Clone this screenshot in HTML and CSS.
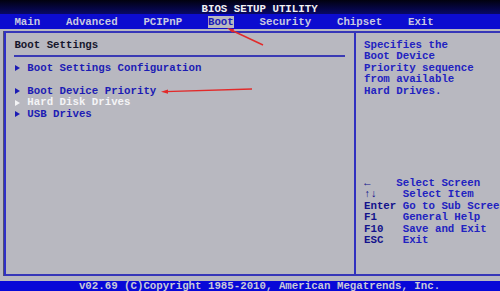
FILE: index.html
```html
<!DOCTYPE html>
<html lang="en">
<head>
<meta charset="utf-8">
<title>BIOS SETUP UTILITY</title>
<link rel="stylesheet" href="styles.css">
</head>
<body>
<div class="screen">
  <div class="title">                               BIOS SETUP UTILITY</div>
  <div class="menu">  Main    Advanced    PCIPnP    <span class="active">Boot</span>    Security    Chipset    Exit</div>
  <div class="main">
    <div class="box">
      <div class="left">
        <div class="row head">Boot Settings</div>
        <div class="sep"></div>
        <div class="row item"><span class="tri"></span>Boot Settings Configuration</div>
        <div class="row"></div>
        <div class="row item"><span class="tri"></span>Boot Device Priority</div>
        <div class="row item sel"><span class="tri"></span>Hard Disk Drives</div>
        <div class="row item"><span class="tri"></span>USB Drives</div>
      </div>
      <div class="right">
        <div class="help">
          <div class="row">Specifies the</div>
          <div class="row">Boot Device</div>
          <div class="row">Priority sequence</div>
          <div class="row">from available</div>
          <div class="row">Hard Drives.</div>
        </div>
        <div class="keys">
          <div class="row"><span class="k">←</span>    Select Screen</div>
          <div class="row"><span class="k">↑↓</span>    Select Item</div>
          <div class="row"><span class="k">Enter</span> Go to Sub Screen</div>
          <div class="row"><span class="k">F1</span>    General Help</div>
          <div class="row"><span class="k">F10</span>   Save and Exit</div>
          <div class="row"><span class="k">ESC</span>   Exit</div>
        </div>
      </div>
    </div>
  </div>
  <div class="footer">            v02.69 (C)Copyright 1985-2010, American Megatrends, Inc.</div>
  <svg class="arrows" width="500" height="291" viewBox="0 0 500 291">
    <line x1="263" y1="45" x2="231" y2="30" stroke="#e22a2a" stroke-width="1.4"/>
    <polygon points="227,28 234.2,29.2 232.5,32.8" fill="#e22a2a"/>
    <line x1="252" y1="89" x2="165" y2="91.6" stroke="#e22a2a" stroke-width="1.4"/>
    <polygon points="161,91.7 168,89.6 168,93.8" fill="#e22a2a"/>
  </svg>
</div>
</body>
</html>
```

FILE: styles.css
```css
* { box-sizing: border-box; margin: 0; padding: 0; }
html, body { width: 500px; height: 291px; overflow: hidden; background: #b8b8c0; }
body { font: bold 10.75px/11.5px "Liberation Mono", "DejaVu Sans Mono", monospace; }

.screen {
  position: relative;
  width: 500px;
  height: 291px;
  overflow: hidden;
  background: #b8b8c0;
  display: flex;
  flex-direction: column;
}

.title {
  height: 14px;
  flex-shrink: 0;
  padding: 4px 0 0 1.5px;
  background: linear-gradient(#01010f, #080866);
  color: #f2f2f2;
  white-space: pre;
  line-height: 11.5px;
}

.menu {
  height: 15px;
  flex-shrink: 0;
  padding: 0.5px 0 0 1.5px;
  background: #0c0cd0;
  color: #c8c8e0;
  white-space: pre;
  line-height: 15px;
}
.menu .active { background: #b8b8c0; color: #1c1cb8; }

.main {
  flex: 1;
  padding: 2px 0 0 4px;
}

.box {
  display: flex;
  height: 245px;
  width: 520px;
  border-top: 2px solid #3636b8;
  border-bottom: 2px solid #3636b8;
  border-left: 2px solid #3030c8;
  box-shadow: -1px 0 0 #505070;
}

.row { height: 11.5px; white-space: pre; }

.left {
  width: 350px;
  flex-shrink: 0;
  padding: 6.5px 9px 0 8.4px;
  border-right: 2px solid #3030c0;
}
.head { color: #16162c; }
.sep { height: 11.5px; padding-top: 4px; }
.sep::before { content: ""; display: block; height: 1.5px; background: #3a3ab4; }

.item { display: flex; align-items: center; color: #1c1cb4; }
.item.sel { color: #f4f4f6; }
.tri { width: 12.9px; height: 11.5px; flex-shrink: 0; display: flex; align-items: center; padding-left: 1px; }
.tri::before {
  content: "";
  border-left: 5px solid currentColor;
  border-top: 3px solid transparent;
  border-bottom: 3px solid transparent;
}

.right {
  flex: 1;
  padding: 6.5px 0 0 8px;
  color: #2222c0;
}
.keys { margin-top: 80.5px; }
.k { color: #12128c; }

.footer {
  height: 10px;
  flex-shrink: 0;
  margin-top: 5px;
  padding-left: 1.5px;
  background: #0808d8;
  color: #c8c8d8;
  white-space: pre;
  line-height: 10px;
}

.arrows { position: absolute; left: 0; top: 0; pointer-events: none; }
```
